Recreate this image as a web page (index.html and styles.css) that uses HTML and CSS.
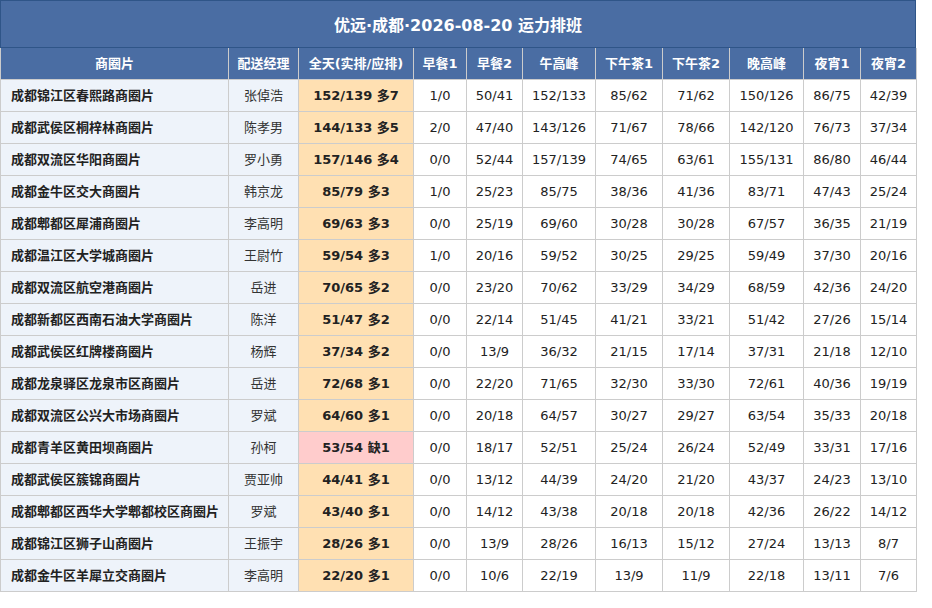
FILE: index.html
```html
<!DOCTYPE html>
<html lang="zh-CN">
<head>
<meta charset="utf-8">
<title>优远·成都·2026-08-20 运力排班</title>
<link rel="stylesheet" href="styles.css">
</head>
<body>
<div class="sheet">
  <div class="title">优远·成都·2026-08-20 运力排班</div>
  <table class="grid">
    <colgroup>
      <col class="c-area"><col class="c-mgr"><col class="c-total"><col class="c-b1"><col class="c-b2"><col class="c-noon"><col class="c-t1"><col class="c-t2"><col class="c-eve"><col class="c-n1"><col class="c-n2">
    </colgroup>
    <thead>
      <tr><th>商圈片</th><th>配送经理</th><th>全天(实排/应排)</th><th>早餐1</th><th>早餐2</th><th>午高峰</th><th>下午茶1</th><th>下午茶2</th><th>晚高峰</th><th>夜宵1</th><th>夜宵2</th></tr>
    </thead>
    <tbody>
      <tr><td class="area">成都锦江区春熙路商圈片</td><td class="mgr">张倬浩</td><td class="total over">152/139 多7</td><td>1/0</td><td>50/41</td><td>152/133</td><td>85/62</td><td>71/62</td><td>150/126</td><td>86/75</td><td>42/39</td></tr>
      <tr><td class="area">成都武侯区桐梓林商圈片</td><td class="mgr">陈孝男</td><td class="total over">144/133 多5</td><td>2/0</td><td>47/40</td><td>143/126</td><td>71/67</td><td>78/66</td><td>142/120</td><td>76/73</td><td>37/34</td></tr>
      <tr><td class="area">成都双流区华阳商圈片</td><td class="mgr">罗小勇</td><td class="total over">157/146 多4</td><td>0/0</td><td>52/44</td><td>157/139</td><td>74/65</td><td>63/61</td><td>155/131</td><td>86/80</td><td>46/44</td></tr>
      <tr><td class="area">成都金牛区交大商圈片</td><td class="mgr">韩京龙</td><td class="total over">85/79 多3</td><td>1/0</td><td>25/23</td><td>85/75</td><td>38/36</td><td>41/36</td><td>83/71</td><td>47/43</td><td>25/24</td></tr>
      <tr><td class="area">成都郫都区犀浦商圈片</td><td class="mgr">李高明</td><td class="total over">69/63 多3</td><td>0/0</td><td>25/19</td><td>69/60</td><td>30/28</td><td>30/28</td><td>67/57</td><td>36/35</td><td>21/19</td></tr>
      <tr><td class="area">成都温江区大学城商圈片</td><td class="mgr">王尉竹</td><td class="total over">59/54 多3</td><td>1/0</td><td>20/16</td><td>59/52</td><td>30/25</td><td>29/25</td><td>59/49</td><td>37/30</td><td>20/16</td></tr>
      <tr><td class="area">成都双流区航空港商圈片</td><td class="mgr">岳进</td><td class="total over">70/65 多2</td><td>0/0</td><td>23/20</td><td>70/62</td><td>33/29</td><td>34/29</td><td>68/59</td><td>42/36</td><td>24/20</td></tr>
      <tr><td class="area">成都新都区西南石油大学商圈片</td><td class="mgr">陈洋</td><td class="total over">51/47 多2</td><td>0/0</td><td>22/14</td><td>51/45</td><td>41/21</td><td>33/21</td><td>51/42</td><td>27/26</td><td>15/14</td></tr>
      <tr><td class="area">成都武侯区红牌楼商圈片</td><td class="mgr">杨辉</td><td class="total over">37/34 多2</td><td>0/0</td><td>13/9</td><td>36/32</td><td>21/15</td><td>17/14</td><td>37/31</td><td>21/18</td><td>12/10</td></tr>
      <tr><td class="area">成都龙泉驿区龙泉市区商圈片</td><td class="mgr">岳进</td><td class="total over">72/68 多1</td><td>0/0</td><td>22/20</td><td>71/65</td><td>32/30</td><td>33/30</td><td>72/61</td><td>40/36</td><td>19/19</td></tr>
      <tr><td class="area">成都双流区公兴大市场商圈片</td><td class="mgr">罗斌</td><td class="total over">64/60 多1</td><td>0/0</td><td>20/18</td><td>64/57</td><td>30/27</td><td>29/27</td><td>63/54</td><td>35/33</td><td>20/18</td></tr>
      <tr><td class="area">成都青羊区黄田坝商圈片</td><td class="mgr">孙柯</td><td class="total short">53/54 缺1</td><td>0/0</td><td>18/17</td><td>52/51</td><td>25/24</td><td>26/24</td><td>52/49</td><td>33/31</td><td>17/16</td></tr>
      <tr><td class="area">成都武侯区簇锦商圈片</td><td class="mgr">贾亚帅</td><td class="total over">44/41 多1</td><td>0/0</td><td>13/12</td><td>44/39</td><td>24/20</td><td>21/20</td><td>43/37</td><td>24/23</td><td>13/10</td></tr>
      <tr><td class="area">成都郫都区西华大学郫都校区商圈片</td><td class="mgr">罗斌</td><td class="total over">43/40 多1</td><td>0/0</td><td>14/12</td><td>43/38</td><td>20/18</td><td>20/18</td><td>42/36</td><td>26/22</td><td>14/12</td></tr>
      <tr><td class="area">成都锦江区狮子山商圈片</td><td class="mgr">王振宇</td><td class="total over">28/26 多1</td><td>0/0</td><td>13/9</td><td>28/26</td><td>16/13</td><td>15/12</td><td>27/24</td><td>13/13</td><td>8/7</td></tr>
      <tr><td class="area">成都金牛区羊犀立交商圈片</td><td class="mgr">李高明</td><td class="total over">22/20 多1</td><td>0/0</td><td>10/6</td><td>22/19</td><td>13/9</td><td>11/9</td><td>22/18</td><td>13/11</td><td>7/6</td></tr>
    </tbody>
  </table>
</div>
</body>
</html>
```
FILE: styles.css
```css
html, body {
  margin: 0;
  padding: 0;
  background: #ffffff;
}
body {
  font-family: "DejaVu Sans", "Noto Sans CJK SC", sans-serif;
  font-size: 13px;
  color: #222222;
}
.sheet {
  width: 916px;
}
.title {
  box-sizing: border-box;
  height: 48px;
  background: #4a6da3;
  border: 1px solid #2f5588;
  color: #ffffff;
  font-size: 16px;
  font-weight: bold;
  display: flex;
  align-items: center;
  justify-content: center;
}
.grid {
  width: 916px;
  border-collapse: collapse;
  table-layout: fixed;
}
.c-area { width: 228px; }
.c-mgr { width: 70px; }
.c-total { width: 115px; }
.c-b1 { width: 53px; }
.c-b2 { width: 56px; }
.c-noon { width: 73px; }
.c-t1 { width: 67px; }
.c-t2 { width: 67px; }
.c-eve { width: 74px; }
.c-n1 { width: 57px; }
.c-n2 { width: 56px; }
.grid th,
.grid td {
  border: 1px solid #cccccc;
  padding: 6px 4px;
  line-height: 19px;
  text-align: center;
  white-space: nowrap;
  overflow: hidden;
}
.grid th {
  background: #4a6da3;
  color: #ffffff;
  font-weight: bold;
  border-top: none;
}
.grid td {
  background: #ffffff;
  color: #222222;
}
.grid td.area {
  background: #eef3fa;
  text-align: left;
  padding-left: 10px;
  font-weight: bold;
}
.grid td.mgr {
  background: #eef3fa;
  color: #333333;
}
.grid td.total {
  font-weight: bold;
}
.grid td.over {
  background: #ffe0b2;
}
.grid td.short {
  background: #ffcccc;
}
```
